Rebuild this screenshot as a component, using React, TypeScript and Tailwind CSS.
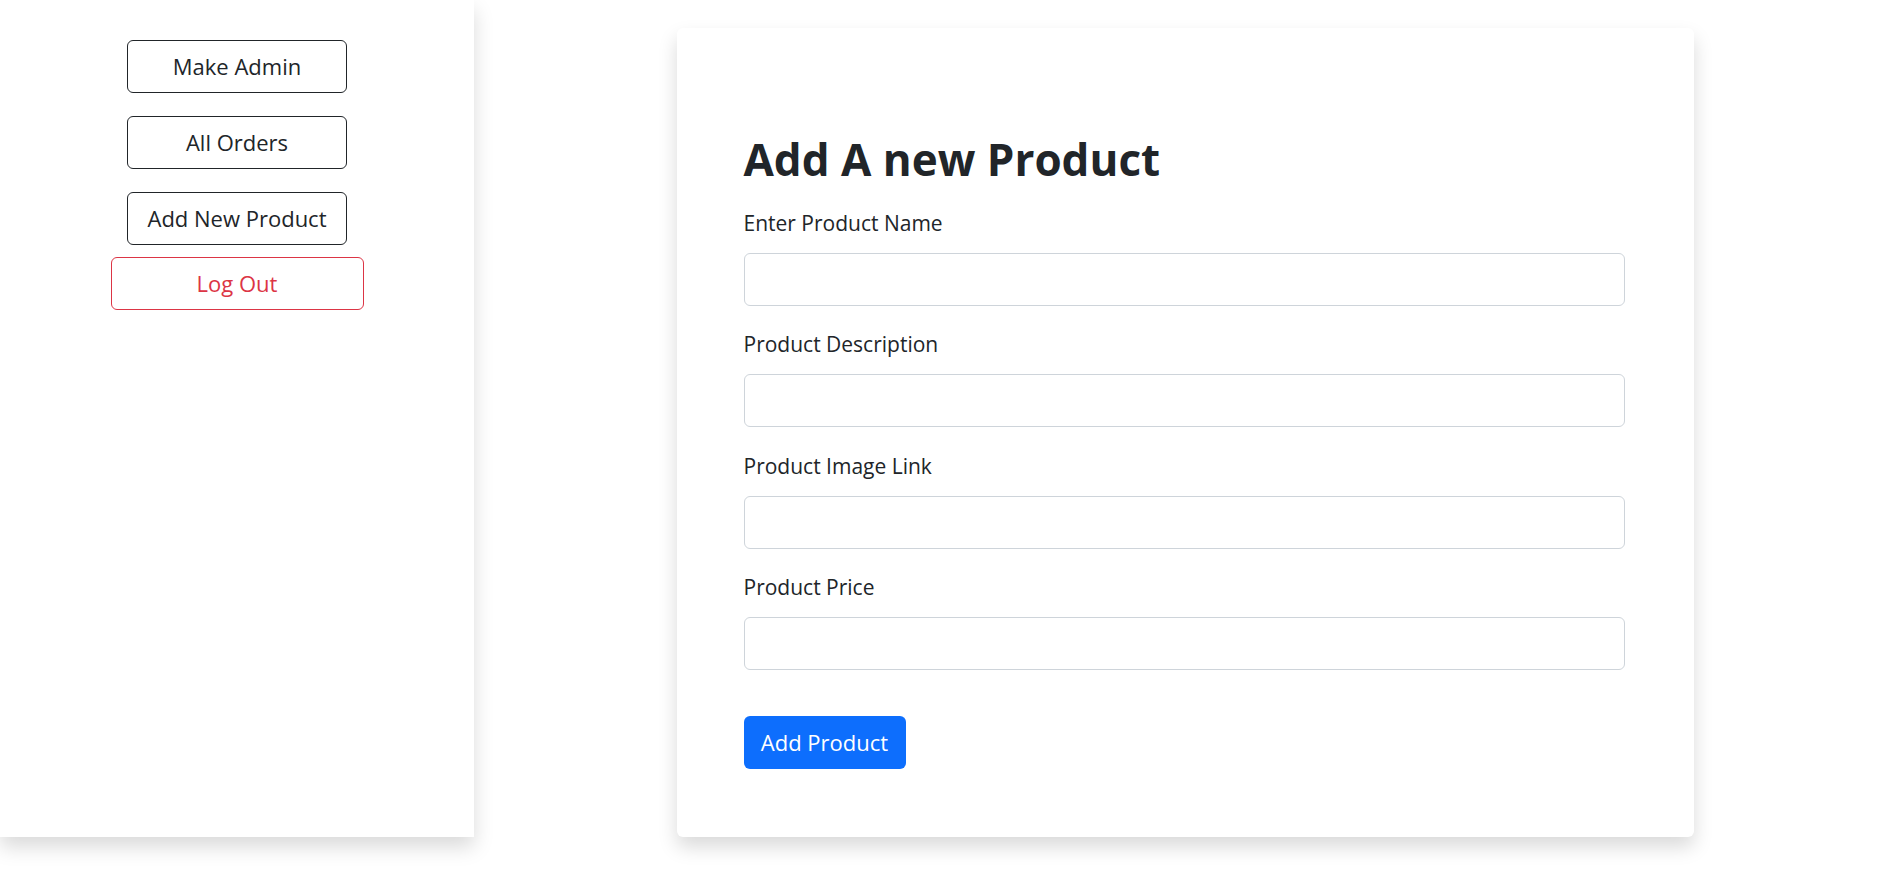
const font = { fontFamily: '"Segoe UI", "Open Sans", "Noto Sans", sans-serif' }

const menu = ['Make Admin', 'All Orders', 'Add New Product']
const fields = ['Enter Product Name', 'Product Description', 'Product Image Link', 'Product Price']

function Sidebar() {
  return (
    <aside className="w-[474px] h-[837px] shrink-0 bg-white shadow-[0_10px_19px_rgba(0,0,0,0.15)] flex flex-col items-center pt-10">
      {menu.map(item => (
        <button
          key={item}
          className="w-[220px] h-[53px] mb-[23px] rounded-[6px] border border-[#212529] text-[22px] text-[#212529] bg-white flex items-center justify-center"
        >
          {item}
        </button>
      ))}
      <button className="-mt-[11px] w-[253px] h-[53px] rounded-[6px] border border-[#dc3545] text-[22px] text-[#dc3545] bg-white flex items-center justify-center">
        Log Out
      </button>
    </aside>
  )
}

function ProductForm() {
  return (
    <div className="w-[1017px] mt-[28px] h-[809px] bg-white rounded-[6px] shadow-[0_10px_19px_rgba(0,0,0,0.15)] pt-[105px] pl-[67px] pr-[69px]">
      <h1 className="text-[44px] leading-[1.2] font-bold text-[#212529] mb-[22px]">Add A new Product</h1>
      <form onSubmit={e => e.preventDefault()}>
        {fields.map(label => (
          <div key={label} className="mb-[23.5px]">
            <label className="block text-[21px] leading-[30px] text-[#212529] mb-[15px]">{label}</label>
            <input className="block w-full h-[53px] rounded-[6px] border border-[#ced4da] bg-white px-4 outline-none" />
          </div>
        ))}
        <button className="mt-[46px] w-[162px] h-[53px] rounded-[6px] bg-[#0d6efd] text-white text-[22px] flex items-center justify-center">
          Add Product
        </button>
      </form>
    </div>
  )
}

export default function App() {
  return (
    <div className="w-[1896px] h-[896px] bg-white flex" style={font}>
      <Sidebar />
      <div className="flex-1 flex justify-center items-start">
        <ProductForm />
      </div>
    </div>
  )
}
